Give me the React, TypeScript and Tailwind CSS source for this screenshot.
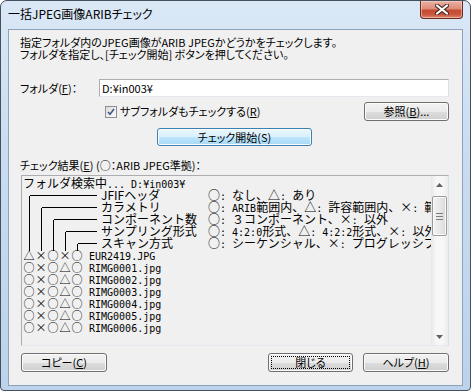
import React from 'react';

type BtnProps = {
  children: React.ReactNode;
  className?: string;
  primary?: boolean;
  focus?: boolean;
};

const WinButton: React.FC<BtnProps> = ({ children, className = '', primary = false, focus = false }) => {
  const skin = primary
    ? 'border-[#3c7fb1] bg-[linear-gradient(to_bottom,#eaf6fd_0%,#d9f0fc_50%,#bee6fd_51%,#a7d9f5_100%)]'
    : 'border-[#707070] bg-[linear-gradient(to_bottom,#f2f2f2_0%,#ebebeb_50%,#dddddd_51%,#cfcfcf_100%)]';
  return (
    <div
      className={`flex items-center justify-center rounded-[3px] border p-[2px] shadow-[inset_0_0_0_1px_#fbfbfb] ${skin} ${className}`}
    >
      <div
        className={`flex h-full w-full items-center justify-center leading-none ${
          focus ? 'border border-dotted border-black' : 'border border-transparent'
        }`}
      >
        {children}
      </div>
    </div>
  );
};

// half-width runs get a 6px-per-char mono face, the rest stays full width (12px)
const Mono: React.FC<{ text: string }> = ({ text }) => {
  const parts = text.split(/([\x20-\x7e¥]+)/).filter(Boolean);
  return (
    <>
      {parts.map((p, i) =>
        /^[\x20-\x7e¥]+$/.test(p) ? (
          <span key={i} className="whitespace-pre font-['DejaVu_Sans_Mono',monospace] text-[10px]">
            {p}
          </span>
        ) : (
          <span key={i}>{p}</span>
        )
      )}
    </>
  );
};

const legend: [string, string][] = [
  ['JFIFヘッダ', '○: なし、△: あり'],
  ['カラメトリ', '○: ARIB範囲内、△: 許容範囲内、×: 範囲外'],
  ['コンポーネント数', '○: ３コンポーネント、×: 以外'],
  ['サンプリング形式', '○: 4:2:0形式、△: 4:2:2形式、×: 以外'],
  ['スキャン方式', '○: シーケンシャル、×: プログレッシブ'],
];

const files: [string[], string][] = [
  [['△', '×', '○', '×', '○'], 'EUR2419.JPG'],
  [['○', '×', '○', '△', '○'], 'RIMG0001.jpg'],
  [['○', '×', '○', '△', '○'], 'RIMG0002.jpg'],
  [['○', '×', '○', '△', '○'], 'RIMG0003.jpg'],
  [['○', '×', '○', '△', '○'], 'RIMG0004.jpg'],
  [['○', '×', '○', '△', '○'], 'RIMG0005.jpg'],
  [['○', '×', '○', '△', '○'], 'RIMG0006.jpg'],
];

// tree lines joining the legend rows to the result columns
const TreeLines: React.FC = () => {
  const cols = [7, 19, 31, 43, 55];
  return (
    <svg className="pointer-events-none absolute left-0 top-0" width="80" height="80" shapeRendering="crispEdges">
      {cols.map((x, i) => {
        const y = 19 + i * 12;
        return (
          <g key={x} stroke="#000" strokeWidth="1">
            <line x1={x + 0.5} y1={y + 0.5} x2="75" y2={y + 0.5} />
            <line x1={x + 0.5} y1={y + 0.5} x2={x + 0.5} y2="75" />
          </g>
        );
      })}
    </svg>
  );
};

const ScrollBar: React.FC = () => (
  <div className="flex w-[17px] flex-col bg-[linear-gradient(to_right,#e8e8e8,#f7f7f7_30%,#f7f7f7_70%,#ececec)]">
    <div className="flex h-[17px] items-center justify-center">
      <svg width="7" height="4">
        <path d="M0 4 L3.5 0 L7 4 Z" fill="#606060" />
      </svg>
    </div>
    <div className="mx-[1px] mt-[3px] flex h-[40px] flex-col items-center justify-center gap-[2px] rounded-[2px] border border-[#9b9b9b] bg-[linear-gradient(to_right,#f3f3f3,#e9e9e9_50%,#d9d9d9)] shadow-[inset_0_0_0_1px_#fafafa]">
      <div className="h-px w-[7px] bg-[#7c7c7c]" />
      <div className="h-px w-[7px] bg-[#7c7c7c]" />
      <div className="h-px w-[7px] bg-[#7c7c7c]" />
    </div>
    <div className="flex-1" />
    <div className="flex h-[17px] items-center justify-center">
      <svg width="7" height="4">
        <path d="M0 0 L7 0 L3.5 4 Z" fill="#606060" />
      </svg>
    </div>
  </div>
);

export default function App() {
  return (
    <div className="h-[391px] w-[471px] overflow-hidden bg-white font-['Noto_Sans_CJK_JP',sans-serif] text-[11px] text-black [font-feature-settings:'palt']">
      <div className="flex h-[391px] w-[471px] flex-col rounded-t-[7px] rounded-b-[4px] border border-[#44505e] bg-[linear-gradient(to_bottom,#dae8f6,#c9dcf0_40%,#bcd3eb)] px-[7px] pb-[4px]">
        {/* title bar */}
        <div className="flex h-[28px] items-start justify-between">
          <div className="pt-[6px] text-[12px] leading-[14px] text-black">一括JPEG画像ARIBチェック</div>
          <div className="flex h-[18px] w-[43px] items-center justify-center rounded-b-[4px] border border-t-0 border-[#6b2a1e] bg-[linear-gradient(to_bottom,#eab1a4_0%,#dc8d79_45%,#c54a30_55%,#c9573f_80%,#dc8a6f_100%)] shadow-[inset_0_0_0_1px_rgba(255,220,210,0.5)]">
            <svg width="14" height="11" viewBox="0 0 14 11">
              <path d="M2 1.5 L12 9.5 M12 1.5 L2 9.5" stroke="#4a2b26" strokeWidth="4.2" strokeLinecap="round" />
              <path d="M2 1.5 L12 9.5 M12 1.5 L2 9.5" stroke="#fff" strokeWidth="2.2" strokeLinecap="round" />
            </svg>
          </div>
        </div>

        {/* client area */}
        <div className="flex flex-1 flex-col border border-[#8ea3bb] bg-[#f0f0f0] pl-[11px] pr-[13px]">
          <div className="pt-[6px] leading-[12px]">
            <div>指定フォルダ内のJPEG画像がARIB JPEGかどうかをチェックします。</div>
            <div>フォルダを指定し、[チェック開始] ボタンを押してください。</div>
          </div>

          <div className="mt-[19px] flex h-[18px] items-center">
            <div className="w-[79px]">
              フォルダ(<span className="underline">F</span>)：
            </div>
            <div className="flex h-[18px] flex-1 items-center border border-[#abadb3] border-b-[#e3e9ef] border-r-[#dbdfe6] bg-white pl-[2px]">
              D:¥in003¥
            </div>
          </div>

          <div className="mt-[5px] flex h-[19px] items-center">
            <div className="ml-[85px] flex items-center">
              <div className="flex h-[12px] w-[12px] items-center justify-center border border-[#8e8f8f] bg-[linear-gradient(to_bottom_right,#dcdcdc,#fbfbfb)]">
                <svg width="8" height="8" viewBox="0 0 8 8">
                  <path d="M1 4 L3 6.3 L7 1" stroke="#3d5a8a" strokeWidth="1.6" fill="none" />
                </svg>
              </div>
              <div className="ml-[3px]">
                サブフォルダもチェックする(<span className="underline">R</span>)
              </div>
            </div>
            <WinButton className="ml-auto h-[19px] w-[85px]">
              参照(<span className="underline">B</span>)...
            </WinButton>
          </div>

          <WinButton primary className="mt-[7px] h-[18px] w-[155px] self-center">
            チェック開始(S)
          </WinButton>

          <div className="mt-[13px] leading-[12px]">
            チェック結果(<span className="underline">E</span>) (○：ARIB JPEG準拠)：
          </div>

          <div className="ml-[1px] mt-[4px] flex h-[171px] border border-[#abadb3] border-b-[#e3e9ef] border-r-[#dbdfe6] bg-[#f0f0f0]">
            <div className="relative flex-1 overflow-hidden pl-[1px] pt-[1px] text-[12px] leading-[12px] [font-feature-settings:normal]">
              <TreeLines />
              <div className="h-[12px] whitespace-nowrap">
                <Mono text="フォルダ検索中... D:¥in003¥" />
              </div>
              {legend.map(([label, desc]) => (
                <div key={label} className="flex h-[12px] whitespace-nowrap">
                  <span className="ml-[78px] inline-block w-[107px] shrink-0">{label}</span>
                  <span>
                    <Mono text={desc} />
                  </span>
                </div>
              ))}
              {files.map(([marks, name]) => (
                <div key={name} className="flex h-[12px] whitespace-nowrap">
                  {marks.map((m, i) => (
                    <span key={i} className="inline-block w-[12px] shrink-0 text-center text-[11px]">
                      {m}
                    </span>
                  ))}
                  <span className="ml-[6px]">
                    <Mono text={name} />
                  </span>
                </div>
              ))}
            </div>
            <ScrollBar />
          </div>

          <div className="mt-[7px] flex h-[19px] items-center">
            <WinButton className="ml-[1px] h-[19px] w-[86px]">
              コピー(<span className="underline">C</span>)
            </WinButton>
            <WinButton focus className="ml-auto h-[19px] w-[85px]">
              閉じる
            </WinButton>
            <WinButton className="ml-[10px] h-[19px] w-[86px]">
              ヘルプ(<span className="underline">H</span>)
            </WinButton>
          </div>
        </div>
      </div>
    </div>
  );
}
